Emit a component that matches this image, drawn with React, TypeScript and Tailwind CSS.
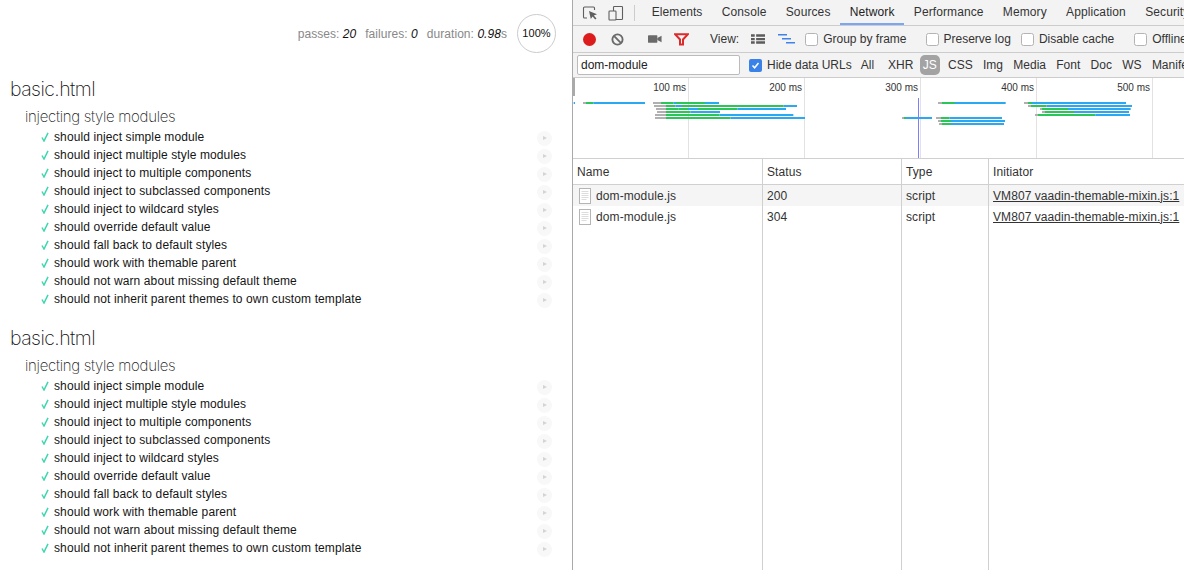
import React from "react";

const tests = [
  "should inject simple module",
  "should inject multiple style modules",
  "should inject to multiple components",
  "should inject to subclassed components",
  "should inject to wildcard styles",
  "should override default value",
  "should fall back to default styles",
  "should work with themable parent",
  "should not warn about missing default theme",
  "should not inherit parent themes to own custom template",
];

const G = "#b0b0b0";
const g = "#2cc55a";
const b = "#2aa8f2";
// [zoomedY, offsetX, [[colour, zx1, zx2]...]]
const bars: [number, number, [string, number, number][]][] = [
  [75, 572, [[b, 5, 9], [G, 33, 42], [g, 42, 64], [b, 64, 219], [G, 243, 267], [g, 267, 305], [b, 305, 312], [g, 312, 399], [b, 399, 441]]],
  [84, 572, [[G, 246, 282], [g, 282, 310], [b, 310, 330], [g, 330, 635], [b, 635, 675]]],
  [93, 572, [[G, 252, 282], [g, 282, 320], [b, 348, 378], [g, 320, 348], [g, 378, 496], [b, 496, 642]]],
  [102, 572, [[G, 255, 282], [g, 282, 355], [b, 355, 444]]],
  [111, 572, [[G, 249, 282], [g, 282, 443], [b, 443, 664]]],
  [120, 572, [[G, 249, 282], [g, 282, 476], [b, 476, 699]]],
  [75, 874, [[G, 192, 204], [g, 204, 243], [b, 243, 395], [G, 450, 462], [g, 462, 474], [b, 474, 756]]],
  [84, 874, [[G, 462, 471], [g, 471, 518], [b, 518, 774]]],
  [93, 874, [[G, 498, 504], [g, 504, 582], [b, 582, 770]]],
  [102, 874, [[G, 504, 513], [g, 513, 600], [b, 600, 765]]],
  [111, 874, [[G, 483, 492], [g, 492, 664], [b, 664, 768]]],
  [120, 874, [[G, 84, 90], [g, 90, 96], [b, 96, 174], [G, 186, 201], [g, 201, 227], [b, 227, 384]]],
  [129, 874, [[G, 192, 201], [g, 201, 231], [b, 231, 393]]],
  [138, 874, [[G, 195, 204], [g, 204, 231], [b, 231, 390]]],
];

function Suite() {
  return (
    <section>
      <h1 className="pl-[10px] text-[19.5px] leading-[24px] font-extralight text-[#111] font-['Inter','Liberation_Sans',sans-serif] tracking-[-0.55px]">basic.html</h1>
      <h2 className="mt-[6px] pl-[25px] text-[15px] leading-[20px] font-extralight text-[#222] font-['Inter','Liberation_Sans',sans-serif] tracking-[-0.3px]">injecting style modules</h2>
      <ul className="mt-[1px]">
        {tests.map((t) => (
          <li key={t} className="flex h-[18px] items-center pl-[41px] pr-[20px] text-[12px] tracking-[0.11px] text-[#151515]">
            <svg width="8" height="10" viewBox="0 0 8 10" className="mr-[5px] shrink-0">
              <path d="M1 5.5 L3 9 L7 0.8" fill="none" stroke="#3ed6b0" strokeWidth="1.5" />
            </svg>
            <span className="flex-1">{t}</span>
            <span className="mt-[2px] flex h-[15px] w-[15px] items-center justify-center rounded-full bg-[#f8f8f8]">
              <span className="ml-[1px] h-0 w-0 border-y-[2.5px] border-l-[4px] border-y-transparent border-l-[#d4d4d4]" />
            </span>
          </li>
        ))}
      </ul>
    </section>
  );
}

function Check({ label, checked }: { label: string; checked?: boolean }) {
  return (
    <span className="flex items-center gap-[5px]">
      {checked ? (
        <span className="flex h-[13px] w-[13px] items-center justify-center rounded-[2px] bg-[#3b82e8]">
          <svg width="9" height="9" viewBox="0 0 9 9">
            <path d="M1.5 4.5 L3.6 6.8 L7.5 2" fill="none" stroke="#fff" strokeWidth="1.5" />
          </svg>
        </span>
      ) : (
        <span className="h-[13px] w-[13px] rounded-[2.5px] border border-[#b4b4b4] bg-white" />
      )}
      {label}
    </span>
  );
}

const Cols = "grid grid-cols-[189px_139px_87px_1fr]";

export default function App() {
  return (
    <div className="flex h-[570px] w-[1184px] overflow-hidden bg-white font-['Liberation_Sans',sans-serif]">
      <main className="w-[572px] shrink-0">
        <header className="flex h-[77px] items-start justify-end pr-[16px] pt-[14px] text-[12px] tracking-[0.05px] text-[#888]">
          <div className="flex h-[39px] items-center gap-[9px]">
            <span>passes: <em className="text-[#111]">20</em></span>
            <span>failures: <em className="text-[#111]">0</em></span>
            <span>duration: <em className="text-[#111]">0.98</em>s</span>
          </div>
          <div className="ml-[10px] flex h-[39px] w-[39px] items-center justify-center rounded-full border border-[#ccc] text-[11px] tracking-[0.1px] text-[#111]">100%</div>
        </header>
        <Suite />
        <div className="h-[18px]" />
        <Suite />
      </main>

      <div className="flex min-w-0 flex-1 flex-col border-l border-[#aaa] text-[12px] text-[#333]">
        {/* Tabs */}
        <div className="flex h-[26px] shrink-0 items-center overflow-hidden border-b border-[#ccc] bg-[#f3f3f3] tracking-[0.1px]">
          <div className="flex w-[69px] shrink-0 items-center pl-[9px]">
            <svg width="16" height="16" viewBox="0 0 16 16" className="shrink-0">
              <path d="M5 13H2.5a1 1 0 0 1-1-1V3a1 1 0 0 1 1-1h9a1 1 0 0 1 1 1v2" fill="none" stroke="#5f5f5f" strokeWidth="1.1" />
              <path d="M7 6 L15 9.2 L11.8 10.5 L14.5 13.5 L13.2 14.6 L10.6 11.6 L8.8 14 Z" fill="#5f5f5f" />
            </svg>
            <svg width="16" height="16" viewBox="0 0 16 16" className="ml-[10px] shrink-0">
              <rect x="5.5" y="1.5" width="9" height="13" fill="none" stroke="#5f5f5f" strokeWidth="1.1" rx="0.8" />
              <rect x="1" y="6" width="7" height="9" fill="#f3f3f3" stroke="#5f5f5f" strokeWidth="1.1" rx="0.8" />
            </svg>
            <span className="ml-[10px] h-[16px] w-px bg-[#ccc]" />
          </div>
          {["Elements", "Console", "Sources", "Network", "Performance", "Memory", "Application", "Security"].map((t) => (
            <span key={t} className={"flex h-[25px] shrink-0 items-center px-[9.65px] " + (t === "Network" ? "border-b-2 border-[#7ba6f2] text-[#222]" : "pb-[1px]")}>{t}</span>
          ))}
        </div>
        {/* Controls */}
        <div className="flex h-[27px] shrink-0 items-center overflow-hidden whitespace-nowrap border-b border-[#ccc] bg-[#f3f3f3] pl-[10px]">
          <span className="h-[13px] w-[13px] shrink-0 rounded-full bg-[#dc1c1c]" />
          <svg width="13" height="13" viewBox="0 0 14 14" className="ml-[15px] shrink-0">
            <circle cx="7" cy="7" r="5.5" fill="none" stroke="#6a6a6a" strokeWidth="2" />
            <path d="M3.4 3.4 L10.6 10.6" stroke="#6a6a6a" strokeWidth="2" />
          </svg>
          <span className="ml-[11px] h-[16px] w-px bg-[#ccc]" />
          <svg width="14" height="10" viewBox="0 0 15 10" className="ml-[13px] shrink-0">
            <rect x="0" y="1" width="10" height="8" fill="#6a6a6a" rx="0.5" />
            <path d="M10 4 L14.5 1.5 V8.5 L10 6 Z" fill="#6a6a6a" />
          </svg>
          <svg width="15" height="13" viewBox="0 0 15 13" className="ml-[12px] shrink-0">
            <path d="M1 1.2 H14 L9 6.5 V11.5 H6 V6.5 Z" fill="none" stroke="#dc2b2b" strokeWidth="2" />
          </svg>
          <span className="ml-[10px] h-[16px] w-px bg-[#ccc]" />
          <span className="ml-[11px]">View:</span>
          <svg width="14" height="10" viewBox="0 0 15 10" className="ml-[12px] shrink-0">
            <path d="M0 0h4v2.5H0zM5.5 0H15v2.5H5.5zM0 3.8h4v2.5H0zM5.5 3.8H15v2.5H5.5zM0 7.5h4V10H0zM5.5 7.5H15V10H5.5z" fill="#5c5c5c" />
          </svg>
          <svg width="17" height="10" viewBox="0 0 17 10" className="ml-[13px] shrink-0">
            <path d="M0 0h9v1.6H0zM4 4h9v1.6H4zM8 8h9v1.6H8z" fill="#3f82ea" />
          </svg>
          <span className="ml-[10px]"><Check label="Group by frame" /></span>
          <span className="ml-[10px] h-[16px] w-px bg-[#ccc]" />
          <span className="ml-[9px]"><Check label="Preserve log" /></span>
          <span className="ml-[10px]"><Check label="Disable cache" /></span>
          <span className="ml-[10px] h-[16px] w-px bg-[#ccc]" />
          <span className="ml-[10px]"><Check label="Offline" /></span>
        </div>
        {/* Filter */}
        <div className="flex h-[25px] shrink-0 items-center overflow-hidden whitespace-nowrap border-b border-[#ccc] bg-[#f3f3f3] pl-[4px]">
          <span className="flex h-[20px] w-[163px] shrink-0 items-center rounded-[2px] border border-[#bbb] bg-white pl-[3px] text-[#222]">dom-module</span>
          <span className="ml-[9px]"><Check label="Hide data URLs" checked /></span>
          <span className="ml-[9px]">All</span>
          <span className="ml-[7px] h-[16px] w-px bg-[#ccc]" />
          <div className="ml-[7px] flex items-center gap-[10.3px]">
            <span>XHR</span>
            <span className="-ml-[4px] -mr-[2px] flex h-[20px] w-[20px] items-center justify-center rounded-[5px] bg-[#a3a3a3] text-white">JS</span>
            <span>CSS</span>
            <span>Img</span>
            <span>Media</span>
            <span>Font</span>
            <span>Doc</span>
            <span>WS</span>
            <span>Manifest</span>
          </div>
        </div>
        {/* Overview */}
        <svg width="611" height="80" viewBox="573 78 611 80" className="block h-[80px] shrink-0">
          <rect x="573" y="78" width="2" height="18" fill="#aaa" />
          {[688, 804, 920, 1036, 1152].map((x) => (
            <rect key={x} x={x} y="78" width="1" height="80" fill="#e2e2e2" />
          ))}
          {[["100 ms", 686], ["200 ms", 802], ["300 ms", 918], ["400 ms", 1034], ["500 ms", 1150]].map(([t, x]) => (
            <text key={t as string} x={x as number} y="91" textAnchor="end" fontSize="10" fill="#333" fontFamily="Liberation Sans">{t}</text>
          ))}
          {bars.flatMap(([zy, off, segs]) =>
            segs.map(([c, a, e]) => (
              <rect key={`${zy}-${off}-${a}`} x={off + a / 3} y={78 + zy / 3 - 1} width={(e - a) / 3} height="2" fill={c} />
            ))
          )}
          <rect x="918" y="98" width="1" height="60" fill="#7f7ff5" />
        </svg>
        {/* Table */}
        <div className={Cols + " relative h-[27px] shrink-0 items-center border-y border-[#d0d0d0] bg-white tracking-[0.1px]"}>
          <span className="pl-[4px]">Name</span>
          <span className="flex h-full items-center border-l border-[#d0d0d0] pl-[4px]">Status</span>
          <span className="flex h-full items-center border-l border-[#d0d0d0] pl-[4px]">Type</span>
          <span className="flex h-full items-center border-l border-[#d0d0d0] pl-[4px]">Initiator</span>
        </div>
        <div className="flex-1 tracking-[0.1px]">
          {[["200", "bg-[#f5f5f5]"], ["304", "bg-white"]].map(([s, bg]) => (
            <div key={s} className={Cols + " h-[21px] items-center " + bg}>
              <span className="flex items-center gap-[5px] pl-[6px]">
                <svg width="12" height="16" viewBox="0 0 12 16" className="shrink-0">
                  <rect x="0.5" y="0.5" width="11" height="15" fill="#fff" stroke="#b5b5b5" />
                  <path d="M2.5 3.5h7M2.5 5.5h7M2.5 7.5h7M2.5 9.5h7M2.5 11.5h5" stroke="#dcdcdc" />
                </svg>
                dom-module.js
              </span>
              <span className="flex h-full items-center border-l border-[#d0d0d0] pl-[4px]">{s}</span>
              <span className="flex h-full items-center border-l border-[#d0d0d0] pl-[4px]">script</span>
              <span className="flex h-full items-center overflow-hidden whitespace-nowrap border-l border-[#d0d0d0] pl-[4px] tracking-[0.07px] underline">VM807 vaadin-themable-mixin.js:1</span>
            </div>
          ))}
          <div className={Cols + " h-[345px]"}>
            <span />
            <span className="border-l border-[#d0d0d0]" />
            <span className="border-l border-[#d0d0d0]" />
            <span className="border-l border-[#d0d0d0]" />
          </div>
        </div>
      </div>
    </div>
  );
}
